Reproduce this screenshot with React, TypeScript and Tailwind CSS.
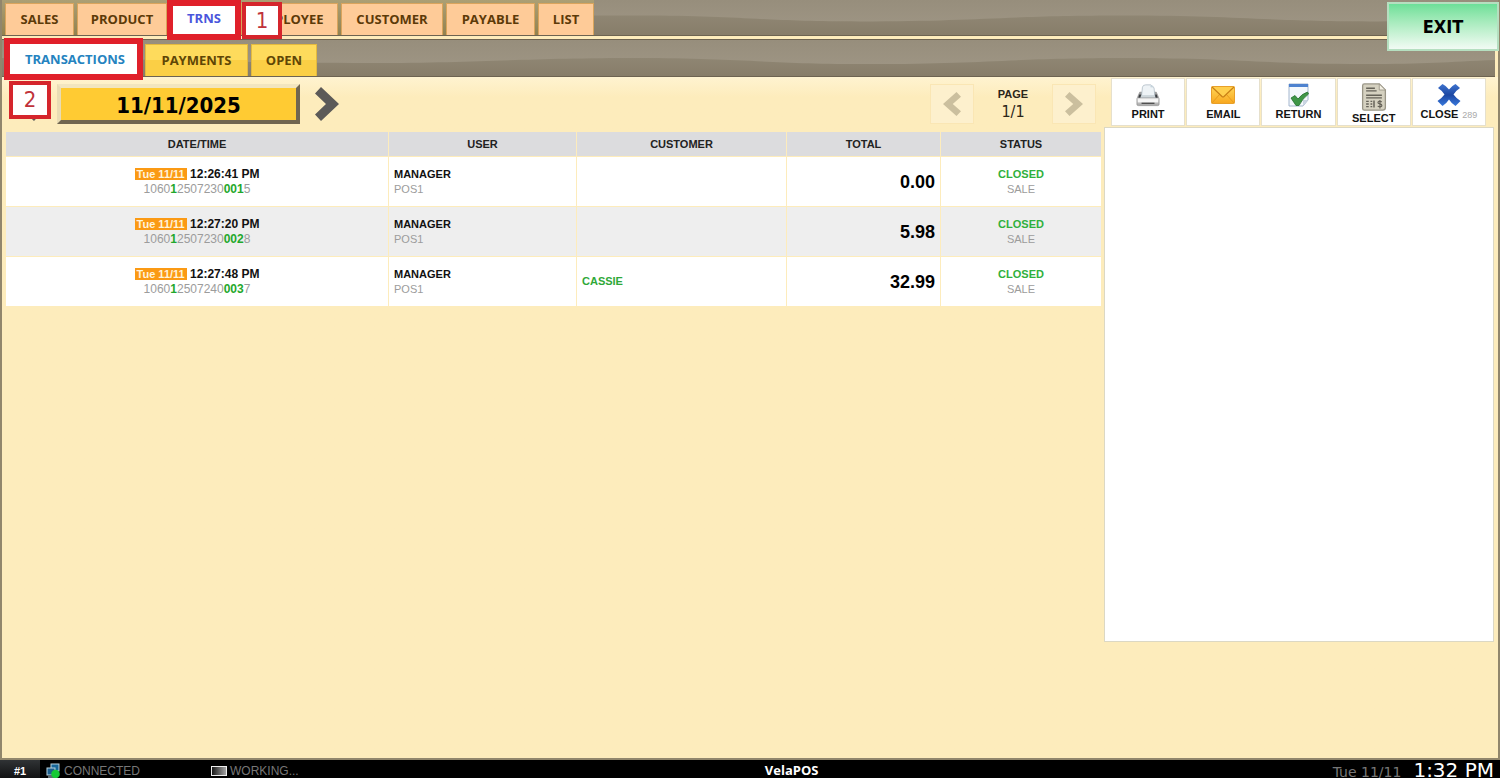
import React from "react";

type Transaction = {
  time: string;
  serial: [string, string, string, string, string];
  customer: string;
  total: string;
};

const transactions: Transaction[] = [
  { time: "12:26:41 PM", serial: ["1060", "1", "2507230", "001", "5"], customer: "", total: "0.00" },
  { time: "12:27:20 PM", serial: ["1060", "1", "2507230", "002", "8"], customer: "", total: "5.98" },
  { time: "12:27:48 PM", serial: ["1060", "1", "2507240", "003", "7"], customer: "CASSIE", total: "32.99" },
];

function Wave({ d }: { d: string }) {
  return (
    <svg className="absolute inset-0 h-full w-full" viewBox="0 0 1500 36" preserveAspectRatio="none" aria-hidden="true">
      <defs>
        <linearGradient id="waveShade" x1="0" y1="0" x2="0" y2="1">
          <stop offset="0" stopColor="#8f8673" />
          <stop offset="1" stopColor="#877d69" />
        </linearGradient>
      </defs>
      <path d={d} fill="url(#waveShade)" />
    </svg>
  );
}

function Marker({ label, className }: { label: string; className: string }) {
  return (
    <span
      className={`absolute z-20 flex items-center justify-center border-4 border-[#d5252c] bg-white font-['DejaVu_Sans_Condensed','DejaVu_Sans',sans-serif] text-[22px] leading-none font-normal text-[#c0323a] ${className}`}
    >
      {label}
    </span>
  );
}

function MainTab({ label, className }: { label: string; className: string }) {
  return (
    <button
      type="button"
      className={`h-8 shrink-0 border border-b-0 border-[#d9a45c] bg-[#fecb98] text-center text-[#5c3a08] ${className}`}
    >
      {label}
    </button>
  );
}

function SubTab({ label, className }: { label: string; className: string }) {
  return (
    <button
      type="button"
      className={`h-8 shrink-0 border border-b-0 border-[#e3b93e] bg-linear-to-b from-[#fedb5c] from-50% to-[#fbcf45] to-50% text-center text-[#5f4606] ${className}`}
    >
      {label}
    </button>
  );
}

function Chevron({ left, className }: { left?: boolean; className: string }) {
  return (
    <svg className={className} viewBox="0 0 24 36" preserveAspectRatio="none" fill="currentColor" aria-hidden="true">
      <path d={left ? "M18 0 0 18 18 36 24 29 13 18 24 7Z" : "M6 0 24 18 6 36 0 29 11 18 0 7Z"} />
    </svg>
  );
}

function PrinterIcon() {
  return (
    <svg width="24" height="24" viewBox="0 0 26 24" aria-hidden="true">
      <defs>
        <linearGradient id="prBody" x1="0" y1="0" x2="0" y2="1">
          <stop offset="0" stopColor="#8d8d8d" />
          <stop offset="0.5" stopColor="#dedede" />
          <stop offset="1" stopColor="#a5a5a5" />
        </linearGradient>
      </defs>
      <path d="M4 9h18l3 7v6q0 1.500-1.500 1.500h-21Q1 23.500 1 22v-6z" fill="url(#prBody)" stroke="#929292" strokeWidth=".8" />
      <path d="M3.500 11.500h19l1.200 3.500H2.300z" fill="#3a3d40" />
      <path d="M6 13 7 3.500Q7.500 1 10.500 1H16l3.500 3 .9 9z" fill="#eef3f6" stroke="#a9b7c0" strokeWidth=".8" />
      <path d="M16 1q2 .5 3.500 3l-4-.5z" fill="#c5d3dc" />
      <path d="M5.500 12.500h15l.8 2.500H4.700z" fill="#ced6da" />
      <path d="M2 16.500h22v3.500H2z" fill="#f8f8f8" />
      <path d="M6 20.300h14v1.400H6z" fill="#4b4b4b" />
    </svg>
  );
}

function MailIcon() {
  return (
    <svg width="24" height="18" viewBox="0 0 24 18" aria-hidden="true">
      <defs>
        <linearGradient id="mailFill" x1="0" y1="0" x2="0" y2="1">
          <stop offset="0" stopColor="#ffd75a" />
          <stop offset="1" stopColor="#f8a71e" />
        </linearGradient>
      </defs>
      <rect x=".5" y=".5" width="23" height="17" rx=".8" fill="url(#mailFill)" stroke="#e8a02a" />
      <path d="M1 17 9 8M23 17l-8-9" stroke="#e79a1c" fill="none" />
      <path d="M1 1 11 10.500q1 .8 2 0L23 1" stroke="#c97f16" strokeWidth="1.200" fill="#ffcf4d" />
    </svg>
  );
}

function ReturnIcon() {
  return (
    <svg width="22" height="24" viewBox="0 0 22 24" aria-hidden="true">
      <path d="M1 1h19v16l-5 6H1z" fill="#f4f8fc" stroke="#a4b6ce" />
      <path d="M1 1h19v3H1z" fill="#4e82cf" />
      <path d="M20 17h-5v6z" fill="#cbd6e2" />
      <path d="m3 15 4-2.500 3 3.500Q13.500 11 19.500 9l1 2Q14 16 11 22.500H8z" fill="#3f9647" stroke="#23702f" strokeWidth=".8" />
    </svg>
  );
}

function InvoiceIcon() {
  return (
    <svg width="28" height="32" viewBox="0 0 28 32" aria-hidden="true">
      <path d="M3 1h17l7 7v20q0 3-3 3H3q-2 0-2-2V3q0-2 2-2z" fill="#d5d1c0" stroke="#9a9687" strokeWidth="1.500" />
      <path d="M20 1v7h7z" fill="#f3f0e4" stroke="#9a9687" />
      <path d="M5 6h10M5 9h12M5 14h18M5 17h18M5 21h3M5 24h3M5 27h3M10 21h2M10 24h2M10 27h2M14 20v8" stroke="#656258" strokeWidth="1.700" fill="none" />
      <path d="M23 21.500q-4.500-1.500-4.500 1 0 1 2.200 1.400 2.300.5 2.300 1.700 0 2.400-4.800.9M20.800 19.500v9.500" stroke="#656258" strokeWidth="1.300" fill="none" />
    </svg>
  );
}

function CrossIcon() {
  return (
    <svg width="26" height="24" viewBox="0 0 26 24" aria-hidden="true">
      <defs>
        <linearGradient id="crossFill" x1="0" y1="0" x2="0" y2="1">
          <stop offset="0" stopColor="#3f74cf" />
          <stop offset=".5" stopColor="#1c47a3" />
          <stop offset="1" stopColor="#3979dc" />
        </linearGradient>
      </defs>
      <path d="M2 5 6.500 1q4 2 6.500 5.500Q15.500 3 19.500 1L24 5q-4 2.500-6.500 6.500 3 4 7 6.500l-5 5q-4-2.500-6.500-6.500Q10.500 20.500 6.500 23l-5-5q4-2.500 7-6.500Q6 7.500 2 5z" fill="url(#crossFill)" />
    </svg>
  );
}

function ActionButton({ label, note, children }: { label: string; note?: string; children: React.ReactNode }) {
  return (
    <button
      type="button"
      className="flex h-12 flex-1 flex-col items-center border border-[#e6e0cc] bg-white pt-1 text-[11px] leading-[14px] font-bold whitespace-nowrap text-[#141414]"
    >
      {children}
      <span>
        {label}
        {note && <span className="pl-1 text-[9px] font-normal text-[#aaaaaa]">{note}</span>}
      </span>
    </button>
  );
}

export default function App() {
  return (
    <div className="flex h-screen flex-col overflow-hidden bg-black font-['Liberation_Sans',Arial,sans-serif]">
      <div className="relative flex min-h-0 flex-1 flex-col border-x-2 border-b-2 border-[#91866c] bg-[#fdecbc]">
        <header className="font-['Open_Sans','Noto_Sans',sans-serif] text-[13px] font-bold">
          <nav className="relative flex h-9 items-end border-b border-[#6d6351] bg-linear-to-b from-[#978e7c] to-[#a09786]">
            <Wave d="M0 20C250 22 400 16 640 16 740 16 760 22 860 22 980 22 1005 16 1125 16 1240 16 1265 22 1380 22 1430 22 1450 20 1500 18V36H0Z" />
            <div className="relative flex gap-[3px] bg-linear-to-b from-[#ac9f74] to-[#92824f] pt-[3px] pl-[3px]">
              <MainTab label="SALES" className="w-[69px]" />
              <MainTab label="PRODUCT" className="w-[90px]" />
              <button type="button" className="relative h-8 w-[68px] bg-white text-[#4a56dc]">
                TRNS
                <span className="absolute -inset-x-[3px] -top-[3px] -bottom-[5px] z-10 border-[6px] border-[#e0202a]" />
                <Marker label="1" className="-top-px left-[72px] h-[37px] w-10" />
              </button>
              <MainTab label="EMPLOYEE" className="w-[97px]" />
              <MainTab label="CUSTOMER" className="w-[102px]" />
              <MainTab label="PAYABLE" className="w-[89px]" />
              <MainTab label="LIST" className="w-[56px]" />
            </div>
          </nav>
          <nav className="relative mt-[3px] mr-[3px] flex h-[38px] items-end border-y border-[#6d6351] bg-linear-to-b from-[#978e7c] to-[#a09786]">
            <Wave d="M0 18C150 18 200 23 370 23 480 23 520 18 640 18 740 18 770 24 870 24 990 24 1010 18 1130 18 1240 18 1265 24 1370 24 1430 24 1450 22 1500 20V36H0Z" />
            <div className="relative flex gap-[3px] px-[6px]">
              <button type="button" className="relative h-8 w-[134px] bg-white text-[#2583c0]">
                TRANSACTIONS
                <span className="absolute -top-[6px] -right-px -bottom-1 -left-1 z-10 border-[6px] border-[#e0202a]" />
              </button>
              <SubTab label="PAYMENTS" className="w-[103px]" />
              <SubTab label="OPEN" className="w-[66px]" />
            </div>
          </nav>
          <button
            type="button"
            className="absolute top-[2px] -right-px z-20 h-[49px] w-[112px] border-2 border-[#b5dfc0] bg-linear-to-b from-[#6cdf98] to-[#f1fbf4] font-['DejaVu_Sans_Condensed','DejaVu_Sans',sans-serif] text-[18px] text-black"
          >
            EXIT
          </button>
        </header>

        <main className="flex min-h-0 flex-1 bg-linear-to-b from-[#fff3d0] to-[#fdecbc] to-[20px]">
          <section className="flex min-w-0 flex-1 flex-col pl-[3px]">
            <div className="relative flex h-[54px] items-center pl-[11px]">
              <button type="button" aria-label="Previous day" className="text-[#5c5a58]">
                <Chevron left className="h-[34px] w-6" />
              </button>
              <Marker label="2" className="top-[4px] left-1 h-[38px] w-[42px]" />
              <button
                type="button"
                className="mr-[15px] ml-[17px] h-10 w-[243px] border-4 border-t-[#f2e5c0] border-r-[#716650] border-b-[#716650] border-l-[#e9dcb4] bg-[#ffcb33] pt-1 font-['DejaVu_Sans_Condensed','DejaVu_Sans',sans-serif] text-[22px] leading-7 font-bold text-black"
              >
                11/11/2025
              </button>
              <button type="button" aria-label="Next day" className="text-[#5c5a58]">
                <Chevron className="h-[34px] w-6" />
              </button>
              <div className="mr-[6px] ml-auto flex items-center">
                <button type="button" aria-label="Previous page" className="flex h-10 w-11 items-center justify-center border border-[#fae6b4] bg-[#fdf0cd] text-[#cbbf9e]">
                  <Chevron left className="h-6 w-[18px]" />
                </button>
                <div className="w-[78px] text-center">
                  <div className="text-[11px] leading-4 font-bold text-[#2b2619]">PAGE</div>
                  <div className="font-['DejaVu_Sans_Condensed','DejaVu_Sans',sans-serif] text-base leading-5 text-[#2b2619]">1/1</div>
                </div>
                <button type="button" aria-label="Next page" className="flex h-10 w-11 items-center justify-center border border-[#fae6b4] bg-[#fdf0cd] text-[#cbbf9e]">
                  <Chevron className="h-6 w-[18px]" />
                </button>
              </div>
            </div>

            <table className="w-full table-fixed border-separate border-spacing-px text-[11px] leading-[15px]">
              <colgroup>
                <col />
                <col className="w-[187px]" />
                <col className="w-[209px]" />
                <col className="w-[153px]" />
                <col className="w-[160px]" />
              </colgroup>
              <thead>
                <tr className="h-6 bg-[#dcdcde] text-[#222]">
                  <th>DATE/TIME</th>
                  <th>USER</th>
                  <th>CUSTOMER</th>
                  <th>TOTAL</th>
                  <th>STATUS</th>
                </tr>
              </thead>
              <tbody>
                {transactions.map((t) => (
                  <tr key={t.time} className="h-[49px] bg-white even:bg-[#eeeeee]">
                    <td className="text-center text-xs leading-[15px]">
                      <div className="font-bold text-[#111]">
                        <span className="bg-[#fb9a14] px-0.5 text-[11px] text-[#fff3da]">Tue 11/11</span> {t.time}
                      </div>
                      <div className="text-[#9c9c9c]">
                        {t.serial[0]}
                        <b className="text-[#1fa82c]">{t.serial[1]}</b>
                        {t.serial[2]}
                        <b className="text-[#1fa82c]">{t.serial[3]}</b>
                        {t.serial[4]}
                      </div>
                    </td>
                    <td className="px-[5px]">
                      <div className="font-bold text-[#111]">MANAGER</div>
                      <div className="text-[#9c9c9c]">POS1</div>
                    </td>
                    <td className="px-[5px] font-bold text-[#2fa838]">{t.customer}</td>
                    <td className="px-[5px] text-right text-lg leading-6 font-bold text-black">{t.total}</td>
                    <td className="text-center">
                      <div className="font-bold text-[#2fb03c]">CLOSED</div>
                      <div className="text-[#9c9c9c]">SALE</div>
                    </td>
                  </tr>
                ))}
              </tbody>
            </table>
          </section>

          <aside className="w-[396px] shrink-0 pt-px pr-1 pl-0.5">
            <div className="flex gap-px pr-2 pl-[7px]">
              <ActionButton label="PRINT">
                <PrinterIcon />
              </ActionButton>
              <ActionButton label="EMAIL">
                <span className="flex h-6 items-center">
                  <MailIcon />
                </span>
              </ActionButton>
              <ActionButton label="RETURN">
                <ReturnIcon />
              </ActionButton>
              <ActionButton label="SELECT">
                <InvoiceIcon />
              </ActionButton>
              <ActionButton label="CLOSE" note="289">
                <CrossIcon />
              </ActionButton>
            </div>
            <div className="mt-px h-[515px] border border-[#dcd8c4] bg-white" />
          </aside>
        </main>
      </div>

      <footer className="flex h-[18px] shrink-0 items-start bg-black text-xs text-[#777]">
        <div className="w-10 bg-linear-to-b from-[#303335] to-[#101112] pt-[3px] text-center text-[11px] leading-4 font-bold text-white">#1</div>
        <div className="flex w-[171px] items-center pt-0.5 pl-[6px] leading-[18px]">
          <svg className="mr-1 h-4 w-[14px]" viewBox="0 0 14 16" aria-hidden="true">
            <rect x="5" y="1" width="8" height="7" fill="#17679a" stroke="#b8d4df" />
            <rect x="1" y="5" width="8" height="7" fill="#1d5e8e" stroke="#b8d4df" />
            <path d="M2 14h6" stroke="#b8d4df" />
            <circle cx="9.500" cy="11" r="4.300" fill="#16c935" />
          </svg>
          CONNECTED
        </div>
        <div className="flex items-center pt-0.5 leading-[18px]">
          <svg className="mr-[3px] h-[10px] w-4" viewBox="0 0 16 10" aria-hidden="true">
            <defs>
              <linearGradient id="meter">
                <stop offset="0" stopColor="#111" />
                <stop offset="1" stopColor="#aaa" />
              </linearGradient>
            </defs>
            <rect x=".5" y=".5" width="15" height="9" fill="url(#meter)" stroke="#eee" />
          </svg>
          WORKING...
        </div>
        <div className="flex-1 pt-0.5 pr-12 text-center font-['Open_Sans',sans-serif] text-[13px] leading-4 font-bold text-white">
          VelaPOS
        </div>
        <div className="flex items-baseline gap-3 pr-[6px] font-['DejaVu_Sans',sans-serif]">
          <span className="text-sm leading-none">Tue 11/11</span>
          <span className="text-xl leading-5 text-white">1:32 PM</span>
        </div>
      </footer>
    </div>
  );
}
